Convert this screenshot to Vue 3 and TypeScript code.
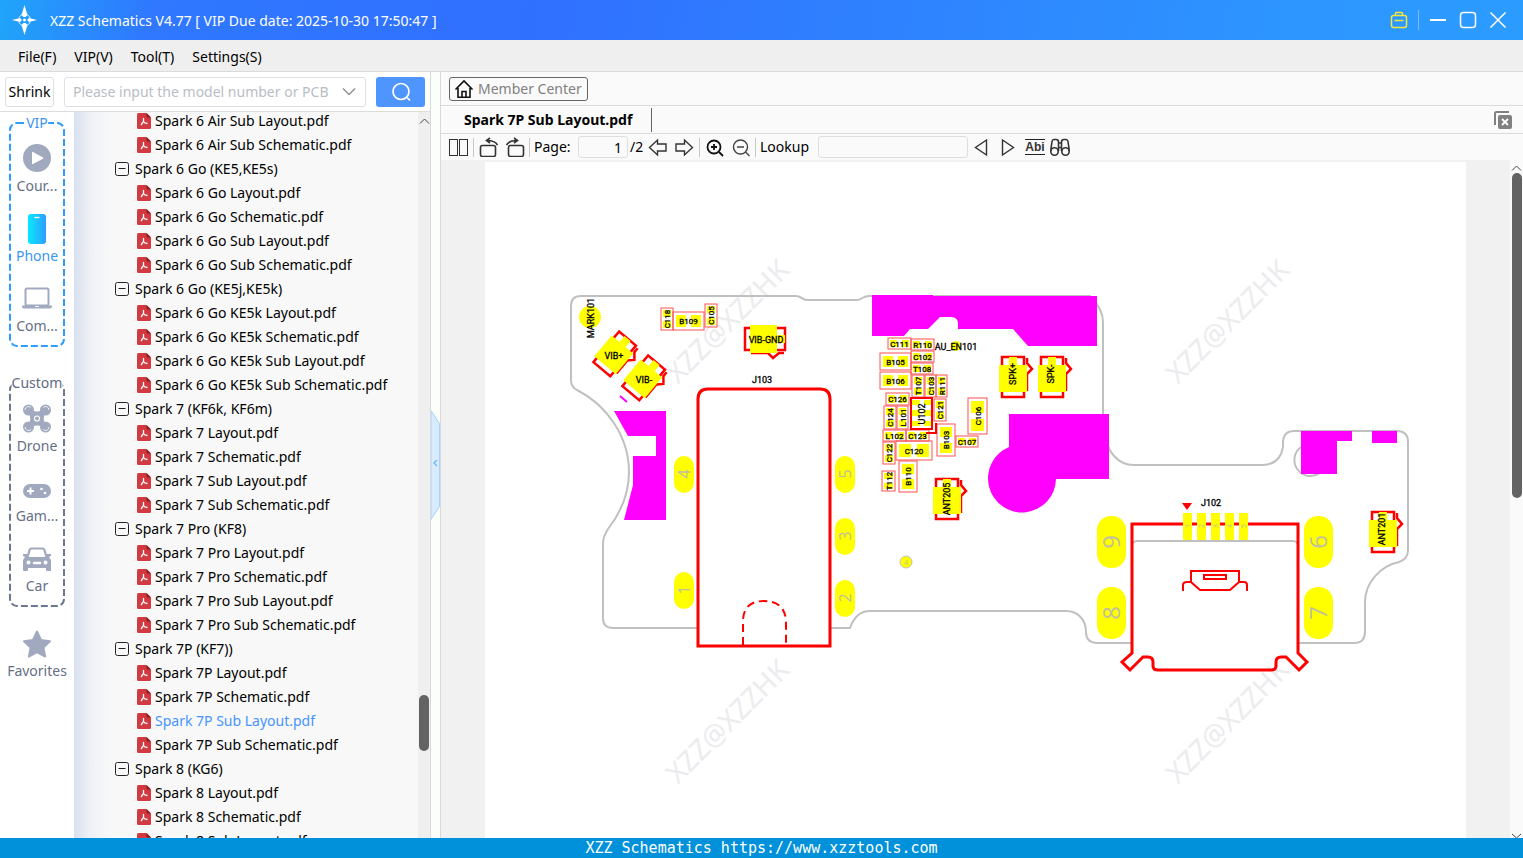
<script setup lang="ts">
import { ref } from 'vue'

interface Folder { name: string; files: string[] }
interface Part { t: string; x: number; y: number; w: number; h: number }

const query = ref('')
const page = ref('1')
const lookup = ref('')
const selected = ref('Spark 7P Sub Layout.pdf')

const menus = ['File(F)', 'VIP(V)', 'Tool(T)', 'Settings(S)']

const folders: Folder[] = [
  { name: '', files: ['Spark 6 Air Sub Layout.pdf', 'Spark 6 Air Sub Schematic.pdf'] },
  { name: 'Spark 6 Go (KE5,KE5s)', files: ['Spark 6 Go Layout.pdf', 'Spark 6 Go Schematic.pdf', 'Spark 6 Go Sub Layout.pdf', 'Spark 6 Go Sub Schematic.pdf'] },
  { name: 'Spark 6 Go (KE5j,KE5k)', files: ['Spark 6 Go KE5k Layout.pdf', 'Spark 6 Go KE5k Schematic.pdf', 'Spark 6 Go KE5k Sub Layout.pdf', 'Spark 6 Go KE5k Sub Schematic.pdf'] },
  { name: 'Spark 7 (KF6k, KF6m)', files: ['Spark 7 Layout.pdf', 'Spark 7 Schematic.pdf', 'Spark 7 Sub Layout.pdf', 'Spark 7 Sub Schematic.pdf'] },
  { name: 'Spark 7 Pro (KF8)', files: ['Spark 7 Pro Layout.pdf', 'Spark 7 Pro Schematic.pdf', 'Spark 7 Pro Sub Layout.pdf', 'Spark 7 Pro Sub Schematic.pdf'] },
  { name: 'Spark 7P (KF7))', files: ['Spark 7P Layout.pdf', 'Spark 7P Schematic.pdf', 'Spark 7P Sub Layout.pdf', 'Spark 7P Sub Schematic.pdf'] },
  { name: 'Spark 8 (KG6)', files: ['Spark 8 Layout.pdf', 'Spark 8 Schematic.pdf', 'Spark 8 Sub Layout.pdf'] },
]

const parts: Part[] = [
  { t: 'C111', x: 888, y: 338, w: 23, h: 11 },
  { t: 'R110', x: 911, y: 339, w: 23, h: 11 },
  { t: 'C102', x: 911, y: 351, w: 23, h: 11 },
  { t: 'B105', x: 880, y: 353, w: 31, h: 17 },
  { t: 'T108', x: 911, y: 363, w: 22, h: 11 },
  { t: 'B106', x: 880, y: 372, w: 31, h: 17 },
  { t: 'T107', x: 912, y: 375, w: 12, h: 22 },
  { t: 'C103', x: 925, y: 375, w: 11, h: 22 },
  { t: 'R111', x: 936, y: 375, w: 11, h: 22 },
  { t: 'C126', x: 886, y: 393, w: 23, h: 12 },
  { t: 'C124', x: 884, y: 406, w: 12, h: 23 },
  { t: 'L101', x: 897, y: 406, w: 11, h: 23 },
  { t: 'C121', x: 934, y: 399, w: 12, h: 22 },
  { t: 'C106', x: 968, y: 398, w: 19, h: 36 },
  { t: 'L102', x: 883, y: 430, w: 23, h: 11 },
  { t: 'C123', x: 906, y: 430, w: 23, h: 11 },
  { t: 'B103', x: 937, y: 424, w: 18, h: 32 },
  { t: 'C107', x: 956, y: 436, w: 22, h: 11 },
  { t: 'C122', x: 883, y: 442, w: 12, h: 22 },
  { t: 'C120', x: 896, y: 441, w: 36, h: 19 },
  { t: 'B110', x: 899, y: 461, w: 18, h: 31 },
  { t: 'T112', x: 882, y: 471, w: 13, h: 20 },
  { t: 'C118', x: 661, y: 308, w: 12, h: 22 },
  { t: 'B109', x: 673, y: 312, w: 31, h: 18 },
  { t: 'C105', x: 705, y: 304, w: 12, h: 23 },
]

function pads(p: Part) {
  const tall = p.h > p.w
  const inset = Math.min(p.w, p.h) > 14 ? 3 : 2
  const len = Math.round((tall ? p.h : p.w) * 0.32)
  return tall
    ? [
        { x: p.x + inset, y: p.y + inset, w: p.w - 2 * inset, h: len },
        { x: p.x + inset, y: p.y + p.h - inset - len, w: p.w - 2 * inset, h: len },
      ]
    : [
        { x: p.x + inset, y: p.y + inset, w: len, h: p.h - 2 * inset },
        { x: p.x + p.w - inset - len, y: p.y + inset, w: len, h: p.h - 2 * inset },
      ]
}
function spin(x: number, y: number, on: boolean) {
  return on ? `translate(${x} ${y}) rotate(-90)` : `translate(${x} ${y})`
}

const contacts = [
  'translate(1001 356)',
  'translate(1040 356)',
  'translate(935 478)',
  'translate(1371 511)',
  'translate(786 327) rotate(90)',
  'translate(619 330) rotate(40)',
  'translate(648 354) rotate(40)',
]
const contactLabels = [
  { t: 'SPK+', x: 1013, y: 374, v: true },
  { t: 'SPK-', x: 1051, y: 374, v: true },
  { t: 'ANT205', x: 947, y: 499, v: true },
  { t: 'ANT201', x: 1382, y: 529, v: true },
  { t: 'VIB-GND', x: 766, y: 340, v: false },
  { t: 'VIB+', x: 614, y: 356, v: false },
  { t: 'VIB-', x: 644, y: 380, v: false },
  { t: 'MARK101', x: 591, y: 318, v: true },
  { t: 'AU_EN101', x: 956, y: 347, v: false },
  { t: 'J103', x: 762, y: 380, v: false },
  { t: 'J102', x: 1211, y: 503, v: false },
  { t: 'U102', x: 922, y: 414, v: true },
]
const smallPads = [
  { t: '4', x: 674, y: 456 }, { t: '1', x: 674, y: 572 },
  { t: '5', x: 835, y: 456 }, { t: '3', x: 835, y: 518 }, { t: '2', x: 835, y: 580 },
]
const bigPads = [
  { t: '9', x: 1097, y: 516 }, { t: '8', x: 1097, y: 587 },
  { t: '6', x: 1304, y: 516 }, { t: '7', x: 1304, y: 587 },
]
const marks = [[678, 385], [1178, 385], [678, 785], [1178, 785]]
</script>

<template>
  <div class="app">
    <header class="titlebar">
      <svg class="logo" width="26" height="30" viewBox="0 0 26 30" aria-hidden="true">
        <circle cx="12.500" cy="15" r="6" fill="none" stroke="#d8ecff" stroke-dasharray="5 4.400" stroke-dashoffset="-2" />
        <path d="M12.500 0 15.500 10 13.500 12h-2L9.500 10zM12.500 30 15.500 20 13.500 18h-2L9.500 20zM0 15l8-2 2 2-2 2zM25 15l-8-2-2 2 2 2z" fill="#fff" />
        <circle cx="12.500" cy="15" r="1.500" fill="#fff" />
      </svg>
      <h1>XZZ Schematics V4.77 [ VIP Due date: 2025-10-30 17:50:47 ]</h1>
      <div class="window-tools">
        <button aria-label="Toolbox">
          <svg width="20" height="20" viewBox="0 0 20 20" fill="none" stroke="#f5e63c" stroke-width="1.500"><rect x="2.500" y="5.500" width="15" height="12" rx="2" /><path d="M6.500 5V3.500q0-1 1-1h5q1 0 1 1V5M5.500 10.500h9" /></svg>
        </button>
        <span class="split"></span>
        <button aria-label="Minimize"><svg width="20" height="20" viewBox="0 0 20 20"><path d="M2 10h16" stroke="#fff" stroke-width="2" /></svg></button>
        <button aria-label="Maximize"><svg width="20" height="20" viewBox="0 0 20 20"><rect x="2.500" y="2.500" width="15" height="15" rx="3" fill="none" stroke="#fff" stroke-width="1.500" /></svg></button>
        <button aria-label="Close"><svg width="20" height="20" viewBox="0 0 20 20"><path d="M2.500 2.500l15 15M17.500 2.500l-15 15" stroke="#fff" stroke-width="1.500" /></svg></button>
      </div>
    </header>

    <nav class="menubar">
      <button v-for="m in menus" :key="m">{{ m }}</button>
    </nav>

    <div class="workspace">
      <section class="left">
        <form class="search" @submit.prevent>
          <button type="button" class="shrink">Shrink</button>
          <div class="combo">
            <input v-model="query" type="text" aria-label="Model search" placeholder="Please input the model number or PCB" />
            <button type="button" aria-label="Show history"><svg width="14" height="10" viewBox="0 0 14 10"><path d="M1 1.500l6 6 6-6" fill="none" stroke="#909399" stroke-width="1.500" /></svg></button>
          </div>
          <button type="submit" class="go" aria-label="Search">
            <svg width="20" height="20" viewBox="0 0 20 20" fill="none" stroke="#fff" stroke-width="1.700"><circle cx="10" cy="9.500" r="8" /><path d="M16 15.500l3 3" /></svg>
          </button>
        </form>

        <div class="browser">
          <aside class="side">
            <div class="box vip">
              <svg class="frame" aria-hidden="true"><rect x="1" y="1" rx="7" /></svg>
              <span class="legend">VIP</span>
              <button class="cat">
                <svg width="30" height="30" viewBox="0 0 30 30"><circle cx="15" cy="15" r="14" fill="#a1a9bf" /><path d="M10 9.500v11q0 1 1 .5l10-5.300q1-.700 0-1.200L11 9q-1-.500-1 .5z" fill="#fff" /></svg>
                <span>Cour...</span>
              </button>
              <button class="cat active">
                <svg width="30" height="32" viewBox="0 0 30 32"><defs><linearGradient id="ph"><stop offset="0" stop-color="#06e9ff" /><stop offset="1" stop-color="#2f9dff" /></linearGradient></defs><rect x="6" y="1" width="18" height="30" rx="3" fill="url(#ph)" /><path d="M12.500 4.500h5" stroke="#fff" stroke-width="1.300" /></svg>
                <span>Phone</span>
              </button>
              <button class="cat">
                <svg width="30" height="30" viewBox="0 0 30 30"><rect x="3.500" y="5.500" width="23" height="17" rx="1.500" fill="none" stroke="#a1a9bf" stroke-width="2" /><path d="M0 22.500h30v1q0 2-2 2H2q-2 0-2-2z" fill="#a1a9bf" /><path d="M13 23.500h4" stroke="#fff" /></svg>
                <span>Com...</span>
              </button>
            </div>
            <div class="box custom">
              <svg class="frame" aria-hidden="true"><rect x="1" y="1" rx="7" /></svg>
              <span class="legend">Custom</span>
              <button class="cat">
                <svg width="30" height="30" viewBox="0 0 30 30">
                  <g fill="#a1a9bf"><circle cx="6.500" cy="7" r="5.500" /><circle cx="23.500" cy="7" r="5.500" /><circle cx="6.500" cy="24" r="5.500" /><circle cx="23.500" cy="24" r="5.500" /></g>
                  <path d="M7 7.500Q15 12 23 7.500 18 15.500 23 23.500 15 19 7 23.500 12 15.500 7 7.500z" fill="#a1a9bf" stroke="#a1a9bf" stroke-width="2.500" />
                  <g fill="none" stroke="#fff" stroke-width=".8"><path d="M3 7a3.500 3.500 0 0 1 6-2.500M3 24a3.500 3.500 0 0 0 6 2.500M27 7a3.500 3.500 0 0 0-6-2.500M27 24a3.500 3.500 0 0 1-6 2.500" /><circle cx="15" cy="15.500" r="2.500" stroke-width="1.200" /></g>
                </svg>
                <span>Drone</span>
              </button>
              <button class="cat">
                <svg width="30" height="30" viewBox="0 0 30 30"><rect x="1" y="11" width="28" height="14" rx="7" fill="#a1a9bf" /><path d="M5 18h7M8.500 14.500v7" stroke="#fff" stroke-width="2" /><circle cx="19.500" cy="16" r="1.300" fill="#fff" /><circle cx="23" cy="20" r="1.300" fill="#fff" /></svg>
                <span>Gam...</span>
              </button>
              <button class="cat">
                <svg width="30" height="30" viewBox="0 0 30 30"><path d="M5.500 14.500 7.500 7q.5-1.500 2-1.500h11q1.500 0 2 1.500l2 7.500" fill="none" stroke="#a1a9bf" stroke-width="2.200" /><path d="M1 11h4v3h20v-3h4v2l-2 1 2 3v10q0 1-1 1h-3q-1 0-1-1v-2H6v2q0 1-1 1H2q-1 0-1-1V17l2-3-2-1z" fill="#a1a9bf" /><circle cx="6.500" cy="19.500" r="2" fill="#fff" /><circle cx="23.500" cy="19.500" r="2" fill="#fff" /><path d="M12 20h6" stroke="#fff" stroke-width="2.400" stroke-linecap="round" /></svg>
                <span>Car</span>
              </button>
            </div>
            <button class="cat fav">
              <svg width="30" height="30" viewBox="0 0 30 30"><path d="M15 2.500l4 8.500 9 1.200-6.600 6.300 1.700 9L15 23.200 6.900 27.500l1.700-9L2 12.200 11 11z" fill="#a1a9bf" stroke="#a1a9bf" stroke-width="2" stroke-linejoin="round" /></svg>
              <span>Favorites</span>
            </button>
          </aside>

          <div class="tree">
            <ul class="folders">
              <li v-for="f in folders" :key="f.name">
                <button v-if="f.name" class="folder">
                  <svg width="14" height="14" viewBox="0 0 14 14" fill="none" stroke="#222"><rect x=".5" y=".5" width="13" height="13" rx="2" /><path d="M3.500 6.500h7" /></svg>
                  {{ f.name }}
                </button>
                <ul>
                  <li v-for="n in f.files" :key="n">
                    <button class="file" :class="{ on: n === selected }" @click="selected = n">
                      <svg width="14" height="16" viewBox="0 0 14 16"><path d="M1.500 0H9.500l4.500 4.500V14.500q0 1.500-1.500 1.500h-11Q0 16 0 14.500v-13Q0 0 1.500 0z" fill="#d23a41" /><path d="M9.500 0l4.500 4.500h-3.500q-1 0-1-1z" fill="#8f1a20" /><path d="M6.500 5v3.500L4 12M6.500 8.500q1 2 4 2" fill="none" stroke="#fff" stroke-width="1.300" /></svg>
                      {{ n }}
                    </button>
                  </li>
                </ul>
              </li>
            </ul>
            <div class="tree-bar">
              <svg width="12" height="16" viewBox="0 0 12 16"><path d="M2 11.500l4.500-4.500 4.500 4.500" fill="none" stroke="#444" /></svg>
              <div class="thumb"></div>
            </div>
          </div>
        </div>
      </section>

      <div class="splitter">
        <button aria-label="Collapse panel">
          <svg width="10" height="110" viewBox="0 0 10 110"><path d="M0 .5 8.500 13.500V96.500L0 109.500z" fill="#d8ebff" stroke="#a3d3fb" /><path d="M6 50l-3 3 3 3" fill="none" stroke="#6bb8f5" stroke-width="1.300" /></svg>
        </button>
      </div>

      <main class="right">
        <div class="member-row">
          <a class="member" href="#member">
            <svg width="20" height="20" viewBox="0 0 20 20" fill="none" stroke="#111" stroke-width="1.600"><path d="M1.500 10.500 10 2l8.500 8.500M4 9v9.200h12V9M8 18v-5.500h4V18" /></svg>
            Member Center
          </a>
        </div>
        <div class="tab-row">
          <button class="tab">Spark 7P Sub Layout.pdf</button>
          <button class="close-all" aria-label="Close all">
            <svg width="20" height="20" viewBox="0 0 20 20"><path d="M2 15V3.500Q2 2 3.500 2H16" fill="none" stroke="#808080" stroke-width="2" /><rect x="5" y="5" width="14" height="14" rx="2" fill="#808080" /><path d="M9 9l6 6M15 9l-6 6" stroke="#fff" stroke-width="1.800" /></svg>
          </button>
        </div>
        <div class="toolbar">
          <button aria-label="Two pages"><svg width="20" height="20" viewBox="0 0 20 20" fill="none" stroke="#333"><rect x=".5" y="2.500" width="8" height="16" /><rect x="10.500" y="2.500" width="8" height="16" /></svg></button>
          <span class="sep"></span>
          <button aria-label="Rotate left"><svg width="20" height="20" viewBox="0 0 20 20" fill="none" stroke="#333" stroke-width="1.600"><rect x="2.500" y="8.500" width="15" height="11" rx="2" /><path d="M19.500 8Q17 3.500 9 3.500M12 1 8.500 3.500 12 6" /></svg></button>
          <button class="step" aria-label="Rotate right"><svg width="20" height="20" viewBox="0 0 20 20" fill="none" stroke="#333" stroke-width="1.600"><rect x="3.500" y="8.500" width="15" height="11" rx="2" /><path d="M1.500 8Q4 3.500 12 3.500M9 1l3.500 2.500L9 6" /></svg></button>
          <span class="sep"></span>
          <label class="page-label" for="page">Page:</label>
          <input id="page" v-model="page" class="page-input" type="text" />
          <span class="total">/2</span>
          <button aria-label="Previous page"><svg width="20" height="20" viewBox="0 0 20 20" fill="none" stroke="#333" stroke-width="1.400"><path d="M1.500 10.500 9.500 3v4H18v7H9.500v4z" /></svg></button>
          <button class="step" aria-label="Next page"><svg width="20" height="20" viewBox="0 0 20 20" fill="none" stroke="#333" stroke-width="1.400"><path d="M17.500 10.500 9.500 3v4H1v7h8.500v4z" /></svg></button>
          <span class="sep"></span>
          <button aria-label="Zoom in"><svg width="20" height="20" viewBox="0 0 20 20" fill="none" stroke="#111" stroke-width="1.800"><circle cx="10" cy="10" r="6.500" /><path d="M15 15l4 4M7 10h6M10 7v6" /></svg></button>
          <button class="step" aria-label="Zoom out"><svg width="20" height="20" viewBox="0 0 20 20" fill="none" stroke="#444" stroke-width="1.400"><circle cx="9.500" cy="10" r="7" /><path d="M14.500 15l4 4M6 10h7" /></svg></button>
          <span class="sep"></span>
          <label class="lookup-label" for="lookup">Lookup</label>
          <input id="lookup" v-model="lookup" class="lookup-input" type="text" />
          <button aria-label="Find previous"><svg width="20" height="20" viewBox="0 0 20 20" fill="none" stroke="#333" stroke-width="1.400"><path d="M15.500 3v15L4.500 10.500z" /></svg></button>
          <button class="step" aria-label="Find next"><svg width="20" height="20" viewBox="0 0 20 20" fill="none" stroke="#333" stroke-width="1.400"><path d="M4.500 3v15L15.500 10.500z" /></svg></button>
          <button class="step abi">Abi</button>
          <button class="find" aria-label="Find in document"><svg width="20" height="20" viewBox="0 0 20 20" fill="none" stroke="#333" stroke-width="1.600"><circle cx="4.500" cy="14.500" r="3.700" /><circle cx="15.500" cy="14.500" r="3.700" /><path d="M1 14V11.500L2 4.500q.3-2 2-2H6q2.500 0 2.500 2.500v9M19 14v-2.500l-1-7q-.3-2-2-2H14q-2.500 0-2.500 2.500v9M8.500 6h3M8.500 10.500h3" /></svg></button>
        </div>

        <div class="viewer">
          <div class="sheet">
            <svg class="board" viewBox="485 162 981 676" role="img" aria-label="Board layout">
              <g class="wm"><text v-for="(m, i) in marks" :key="i" :transform="`translate(${m[0]} ${m[1]}) rotate(-45)`">XZZ@XZZHK</text></g>

              <g fill="none" stroke="#c0c0c0" stroke-width="2">
                <path d="M697 628H613Q603 628 603 618V543Q603 537 608 529C622 511 629 493 629 472C629 437 607 405 577 390Q571 387 571 380V306Q571 296 581 296H796C802 296 801 300 808 300H856C863 300 862 296 869 296H1090Q1103 309 1103 322V430Q1110 465 1134 465H1262Q1280 465 1283 447V441Q1284 431 1294 431H1397Q1408 431 1408 442V550Q1408 559 1399 562C1380 566 1365 583 1365 602V632Q1365 643 1354 643H1299M1131 643H1096Q1086 642 1086 632C1086 620 1078 611 1066 611H870Q856 611 850 628H831" />
                <path d="M1301 447A16 16 0 0 0 1320 473" />
                <path d="M1132 546Q1132 541 1137 541H1293Q1298 541 1298 546" />
              </g>

              <g fill="#f0f">
                <path d="M614 411H666V520H624L633 485V456H656V436H628z" />
                <path d="M872 295H933V296H1097V346H1028L1013 329H958V324Q958 317 951 317H940L928 329H910L904 336H872z" />
                <path d="M1009 414H1109V479H1056A34 34 0 1 1 1009 447z" />
                <path d="M1301 431H1352V441H1337V474H1301zM1372 431H1397V443H1372z" />
              </g>
              <path d="M620 396l7 6" stroke="#f0f" stroke-width="2" />

              <g v-for="p in parts" :key="p.t">
                <rect v-for="(q, i) in pads(p)" :key="i" :x="q.x" :y="q.y" :width="q.w" :height="q.h" fill="#ff0" />
                <rect :x="p.x" :y="p.y" :width="p.w" :height="p.h" class="edge" />
              </g>

              <g v-for="c in contacts" :key="c" :transform="c">
                <path d="M1 1H23V41H1z" fill="#fff" stroke="#f00" stroke-width="2.500" />
                <path d="M26 2V7L31 13 26 18V35" fill="none" stroke="#f00" stroke-width="2.500" />
                <rect x="-2" y="9" width="28" height="27" fill="#ff0" />
                <rect x="8" y="1" width="8" height="8" fill="#ff0" />
              </g>

              <g fill="#ff0"><circle cx="590" cy="317" r="11" /><circle cx="956" cy="346" r="5" /></g>

              <g fill="#ff0">
                <rect x="912" y="400" width="8" height="5" /><rect x="924" y="400" width="8" height="5" />
                <rect x="912" y="410" width="8" height="6" /><rect x="924" y="410" width="8" height="6" />
                <rect x="912" y="421" width="8" height="5" /><rect x="924" y="421" width="8" height="5" />
              </g>
              <path d="M911 398H932V429H911z" fill="none" stroke="#f00" stroke-width="2" />
              <path d="M926 433H936V423" fill="none" stroke="#f00" stroke-width="2" />

              <g fill="none" stroke="#f00" stroke-width="3">
                <path d="M698 646V399Q698 389 708 389H820Q830 389 830 399V646z" />
                <path d="M743 645V620Q744 601 764 601T786 620V645" stroke-width="2" stroke-dasharray="8 5" />
                <path d="M1132 524H1298V653L1307 662 1299 670 1286 657H1281Q1276 657 1276 662V666Q1276 670 1271 670H1158Q1153 670 1153 666V662Q1153 657 1148 657H1143L1130 670 1122 662 1132 653z" />
                <path d="M1183 591V585Q1183 582 1187 582H1192M1191 571H1239V582L1230 590H1200L1191 582zM1239 582H1244Q1247 582 1247 585V591M1204 575H1226V579H1204z" stroke-width="2" />
              </g>
              <path d="M1182 503H1192L1187 510z" fill="#f00" />

              <g fill="#ff0">
                <rect v-for="i in 5" :key="i" :x="1169 + i * 14" y="513" width="9" height="27" />
                <rect v-for="p in smallPads" :key="p.t" :x="p.x" :y="p.y" width="20" height="37" rx="10" />
                <rect v-for="p in bigPads" :key="p.t" :x="p.x" :y="p.y" width="29" height="52" rx="14" />
                <circle cx="906" cy="562" r="6" stroke="#c0c0c0" />
              </g>
              <g class="pin">
                <text v-for="i in 5" :key="i" class="tiny" :transform="spin(1176 + i * 14, 526, true)">{{ i }}</text>
                <text v-for="p in smallPads" :key="p.t" :transform="spin(p.x + 16, p.y + 18, true)">{{ p.t }}</text>
                <text v-for="p in bigPads" :key="p.t" class="big" :transform="spin(p.x + 23, p.y + 26, true)">{{ p.t }}</text>
                <text class="tiny" x="906" y="565">4</text>
              </g>
              <g class="ref">
                <g v-for="p in parts" :key="p.t" :transform="spin(p.x + p.w / 2, p.y + p.h / 2, p.h > p.w)"><text y="3">{{ p.t }}</text></g>
                <g v-for="l in contactLabels" :key="l.t" :transform="spin(l.x, l.y, l.v)"><text class="wide" y="3">{{ l.t }}</text></g>
              </g>
            </svg>
          </div>
          <div class="view-bar">
            <svg width="13" height="13" viewBox="0 0 13 13"><path d="M2 10.500 6.500 6l4.500 4.500" fill="none" stroke="#444" /></svg>
            <div class="thumb"></div>
            <svg class="down" width="13" height="5" viewBox="0 0 13 5"><path d="M2 1l4.500 4L11 1" fill="none" stroke="#444" /></svg>
          </div>
        </div>
      </main>
    </div>

    <footer>XZZ Schematics https://www.xzztools.com</footer>
  </div>
</template>

<style>
body { margin: 0; overflow: hidden; }
</style>

<style scoped>
.app {
  height: 100vh;
  display: grid;
  grid-template-rows: 40px 32px minmax(0, 1fr) 20px;
  font: 14px/20px "Noto Sans", "Open Sans", sans-serif;
  color: #000;
  background: #fff;
}
.app * { box-sizing: border-box; }
button, input { font: inherit; color: inherit; margin: 0; padding: 0; border: 0; background: none; }
input:focus { outline: none; }
svg { display: block; flex: none; }
ul { list-style: none; margin: 0; padding: 0; }

.titlebar {
  display: flex;
  align-items: center;
  padding: 0 15px 0 12px;
  color: #fff;
  background: linear-gradient(100deg, #20a5fa 0, #2f78ff 10%, #3070ff 35%, #2d96ff 85%, #2b9cff 100%);
}
h1 { margin: 0 0 0 12px; padding-top: 2px; font-size: 14px; font-weight: 400; flex: 1; white-space: nowrap; }
.window-tools { display: flex; align-items: center; gap: 10px; }
.split { width: 1px; height: 20px; margin: 0 -1px 0 -1px; background: #7fbcff; }

.menubar { display: flex; align-items: center; gap: 18px; padding: 2px 0 0 18px; background: #efefef; border-bottom: 1px solid #dadada; }

.workspace { display: flex; min-height: 0; }
.left { width: 431px; display: flex; flex-direction: column; border-right: 1px solid #d9d9d9; }
.search { display: flex; align-items: center; height: 40px; padding: 1px 5px 0 5px; border-bottom: 1px solid #dcdcdc; flex: none; }
.shrink { width: 49px; height: 30px; border: 1px solid #dcdfe6; border-radius: 3px; background: #fff; }
.combo { flex: 1; display: flex; align-items: center; height: 30px; margin: 0 10px; padding: 0 9px 0 8px; border: 1px solid #dcdfe6; border-radius: 3px; }
.combo input { flex: 1; min-width: 0; }
.combo input::placeholder { color: #b9bdc5; opacity: 1; }
.go { width: 49px; height: 30px; border-radius: 3px; background: #4f95ff; display: grid; place-items: center; }

.browser { flex: 1; display: flex; min-height: 0; }
.side { width: 74px; padding: 10px 9px 0; display: flex; flex-direction: column; align-items: center; background: #fff; }
.box { position: relative; width: 56px; height: 225px; padding-top: 21px; display: flex; flex-direction: column; align-items: center; gap: 17px; flex: none; }
.box + .box { margin-top: 35px; }
.frame { position: absolute; inset: 0; width: 100%; height: 100%; }
.frame rect { width: calc(100% - 2px); height: calc(100% - 2px); fill: none; stroke-width: 2; stroke-dasharray: 7 3; }
.vip .frame { stroke: #2f9dff; }
.custom .frame { stroke: #6b7690; }
.legend { position: absolute; top: -9px; left: 50%; transform: translateX(-50%); background: #fff; color: #3d94f0; }
.custom .legend { color: #5f6980; }
.cat { height: 53px; display: flex; flex-direction: column; align-items: center; justify-content: space-between; color: #666f85; white-space: nowrap; }
.cat.active { color: #3a97f5; }
.fav { margin-top: 22px; height: 52px; }

.tree { flex: 1; display: flex; min-width: 0; overflow: hidden; background: linear-gradient(90deg, #d8e1f0 0, #eef1f5 16px, #f8f8f8 36px); }
.folders { flex: 1; margin-top: -3px; height: 0; }
.folder, .file { display: flex; align-items: center; height: 24px; white-space: nowrap; }
.folder { margin-left: 41px; gap: 6px; }
.file { margin-left: 63px; gap: 4px; }
.file.on { color: #4794ff; }
.tree-bar { position: relative; width: 12px; background: #efefef; }
.thumb { border-radius: 5px; background: #636363; }
.tree-bar .thumb { position: absolute; bottom: 12%; left: 1px; width: 10px; height: 56px; }

.splitter { width: 9px; background: #fbfffa; display: flex; align-items: center; padding-top: 20px; }
.right { flex: 1; min-width: 0; display: flex; flex-direction: column; border-left: 1px solid #d9d9d9; background: #fafafa; }
.member-row { height: 34px; padding: 5px 8px; border-bottom: 1px solid #dadada; flex: none; }
.member { display: inline-flex; align-items: center; gap: 4px; height: 24px; padding: 0 5px 0 4px; border: 1px solid #666; border-radius: 3px; color: #808080; text-decoration: none; }
.tab-row { height: 28px; display: flex; align-items: center; justify-content: space-between; padding-right: 10px; border-bottom: 1px solid #dadada; flex: none; }
.tab { height: 24px; padding: 0 19px 0 23px; border-right: 1px solid #666; font-weight: 700; }
.toolbar { height: 26px; display: flex; align-items: center; padding-left: 8px; flex: none; }
.toolbar .step { margin-left: 7px; }
.toolbar .find { margin-left: 5px; }
.sep { width: 1px; height: 19px; margin: 0 4px; background: #c8c8c8; }
.page-label { width: 44px; }
.total { width: 20px; padding-left: 2px; }
.lookup-label { width: 58px; }
.page-input, .lookup-input { height: 22px; border: 1px solid #dedede; border-radius: 3px; background: #fafafa; }
.page-input { width: 50px; padding-right: 5px; text-align: right; }
.lookup-input { width: 150px; margin-right: 3px; padding: 0 5px; }
.abi { width: 20px; height: 16px; border-top: 1px solid #222; border-bottom: 1px solid #222; font: 700 12px/14px "Liberation Sans", sans-serif; color: #333; text-align: center; }

.viewer { flex: 1; min-height: 0; display: flex; overflow: hidden; background: #f1f1f1; }
.sheet { flex: 1; min-width: 0; margin: 2px 44px 0; background: #fff; overflow: hidden; }
.board { width: 100%; height: auto; }
.view-bar { position: relative; width: 13px; background: #fafafa; }
.view-bar .thumb { width: 10px; height: 48%; margin-left: 2px; }
.down { position: absolute; bottom: 0; left: 0; }

.wm text { font: 28px "Noto Sans", sans-serif; fill: #ececef; }
.edge { fill: none; stroke: #ff5050; stroke-width: 1; }
.pin text { font: 16px "Open Sans", sans-serif; fill: #c0c0a0; text-anchor: middle; }
.pin .big { font-size: 24px; }
.pin .tiny { font-size: 7px; }
.ref text { font: 8px "Roboto", sans-serif; fill: #000; stroke: #000; stroke-width: 0.3; text-anchor: middle; }
.ref .wide { font-size: 9px; }

footer { background: #0091da; color: #fff; text-align: center; font: 15px/20px "DejaVu Sans Mono", monospace; }
</style>
